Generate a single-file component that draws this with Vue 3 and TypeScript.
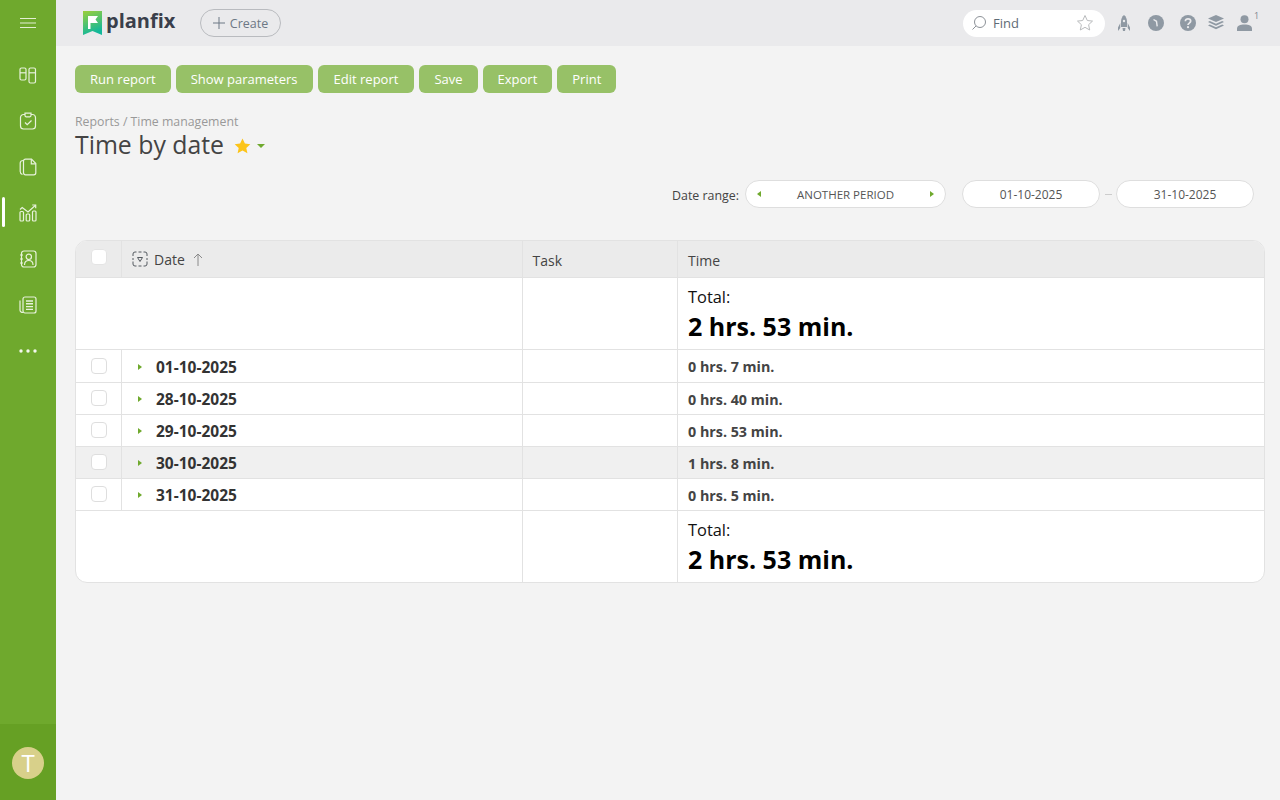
<script setup lang="ts">
const actions: string[] = ['Run report', 'Show parameters', 'Edit report', 'Save', 'Export', 'Print']
const rows = [
  { date: '01-10-2025', time: '0 hrs. 7 min.', hover: false },
  { date: '28-10-2025', time: '0 hrs. 40 min.', hover: false },
  { date: '29-10-2025', time: '0 hrs. 53 min.', hover: false },
  { date: '30-10-2025', time: '1 hrs. 8 min.', hover: true },
  { date: '31-10-2025', time: '0 hrs. 5 min.', hover: false },
]
</script>

<template>
  <div class="page">
    <aside class="side">
      <div class="burger">
        <svg width="16" height="12" viewBox="0 0 16 12"><path d="M0 1.500h16M0 6h16M0 10.500h16" stroke="#e3efd3" stroke-width="1.200" fill="none" /></svg>
      </div>
      <nav class="nav">
        <div class="nav-item">
          <svg width="18" height="18" viewBox="0 0 18 18" fill="none" stroke="#e8f2dc" stroke-width="1.200"><rect x="1" y="2" width="6" height="12" rx="1.500" /><path d="M1 6.800h6" /><rect x="10" y="2" width="6.500" height="15" rx="1.500" /><path d="M10 6.800h6.500" /></svg>
        </div>
        <div class="nav-item">
          <svg width="18" height="18" viewBox="0 0 18 18" fill="none" stroke="#e8f2dc" stroke-width="1.200"><path d="M6 2.500H4.500a3 3 0 0 0-3 3v8.500a3 3 0 0 0 3 3h9a3 3 0 0 0 3-3V5.500a3 3 0 0 0-3-3H12" /><path d="M6 1.200h6v2.400a1.200 1.200 0 0 1-1.200 1.200H7.200A1.200 1.200 0 0 1 6 3.600z" /><path d="M6 10.500l2.200 2.200L12.500 8.500" /></svg>
        </div>
        <div class="nav-item">
          <svg width="18" height="18" viewBox="0 0 18 18" fill="none" stroke="#e8f2dc" stroke-width="1.200"><path d="M4 2.500C2.500 2.500 1.200 3.500 1.200 5v8.500C1.200 15 2.200 16 3.500 16.500" /><path d="M6.500 1.200h6l4.300 4.300v9.300a2 2 0 0 1-2 2H6.500a2 2 0 0 1-2-2V3.200a2 2 0 0 1 2-2z" /><path d="M12.300 1.500v4.300h4.300" /></svg>
        </div>
        <div class="nav-item active">
          <span class="marker"></span>
          <svg width="18" height="18" viewBox="0 0 18 18" fill="none" stroke="#e8f2dc" stroke-width="1.200"><rect x="1" y="7.500" width="3.500" height="9.500" rx="1" /><rect x="7.200" y="10" width="3.500" height="7" rx="1" /><rect x="13.500" y="7" width="3.500" height="10" rx="1" /><path d="M1 5.500l2.200-2 5.800 4.500 7.500-6.800" /><path d="M13.200 1h3.500v3.300" /></svg>
        </div>
        <div class="nav-item">
          <svg width="18" height="18" viewBox="0 0 18 18" fill="none" stroke="#e8f2dc" stroke-width="1.200"><rect x="2.500" y="1" width="14.500" height="16" rx="2.500" /><circle cx="9.800" cy="6.800" r="2.700" /><path d="M5.500 15c0-3 2-4.500 4.300-4.500S14 12 14 15" /><path d="M1 5h3M1 9h3M1 13h3" /></svg>
        </div>
        <div class="nav-item">
          <svg width="18" height="18" viewBox="0 0 18 18" fill="none" stroke="#e8f2dc" stroke-width="1.200"><rect x="4" y="1" width="13" height="16" rx="2" /><path d="M4 16.500C2 16.500 1 15.500 1 14V4.500" /><path d="M7 5h7M7 7.800h7M7 10.600h7M7 13.400h7" stroke-width="1.400" /></svg>
        </div>
        <div class="nav-item">
          <svg width="18" height="6" viewBox="0 0 18 6" fill="#f4f8ee"><circle cx="2" cy="3" r="1.700" /><circle cx="9" cy="3" r="1.700" /><circle cx="16" cy="3" r="1.700" /></svg>
        </div>
      </nav>
      <div class="side-foot">
        <div class="avatar">T</div>
      </div>
    </aside>

    <div class="main">
      <header class="top">
        <div class="logo">
          <svg width="20" height="24" viewBox="0 0 20 24">
            <defs>
              <linearGradient id="lg" x1="0" y1="0" x2="0.300" y2="1">
                <stop offset="0" stop-color="#9ccf3a" />
                <stop offset="1" stop-color="#12b89a" />
              </linearGradient>
            </defs>
            <path d="M0 0h19v24l-9.500-4-9.500 4z" fill="url(#lg)" />
            <path d="M5 18V5h10l-2.500 3.500L15 12H7.500v6z" fill="#fff" />
          </svg>
          <span class="logo-text">planfix</span>
        </div>
        <button class="create">
          <svg width="12" height="12" viewBox="0 0 12 12"><path d="M6 0v12M0 6h12" stroke="#6d7885" stroke-width="1" /></svg>
          <span>Create</span>
        </button>
        <div class="top-right">
          <div class="search">
            <svg width="16" height="16" viewBox="0 0 16 16" fill="none" stroke="#8d9298" stroke-width="1"><circle cx="9" cy="7" r="5.500" /><path d="M5 11l-3.500 3.500" /></svg>
            <span class="find">Find</span>
            <svg class="fav" width="18" height="18" viewBox="0 0 18 18" fill="none" stroke="#b9bbbd" stroke-width="1"><path d="M9 1.500l2.300 5 5.200.6-3.900 3.600 1.100 5.300L9 13.300 4.300 16l1.100-5.300L1.500 7.100l5.200-.6z" /></svg>
          </div>
          <div class="tools">
            <svg class="t-rocket" width="14" height="17" viewBox="0 0 14 17" fill="#8f99a3"><path d="M7 0c2 1.500 3 4 3 6.500V12H4V6.500C4 4 5 1.500 7 0z" /><path d="M3.300 8v5L1 16v-3.500zM10.700 8v5l2.300 3v-3.500z" /><path d="M5.500 13h3l-.5 3H6z" /><circle cx="7" cy="6" r="1.200" fill="#eaeaec" /></svg>
            <svg class="t-clock" width="16" height="16" viewBox="0 0 16 16"><circle cx="8" cy="8" r="8" fill="#8f99a3" /><path d="M5.500 4.500l3 1.800.7 5" stroke="#eaeaec" stroke-width="1.400" fill="none" /></svg>
            <svg class="t-help" width="16" height="16" viewBox="0 0 16 16"><circle cx="8" cy="8" r="8" fill="#8f99a3" /><path d="M5.400 6.200C5.400 4.700 6.500 3.800 8 3.800s2.700.9 2.700 2.300c0 2-2.700 2-2.700 3.900" stroke="#eaeaec" stroke-width="1.700" fill="none" /><circle cx="8" cy="12.200" r="1.100" fill="#eaeaec" /></svg>
            <svg class="t-stack" width="16" height="16" viewBox="0 0 16 16" fill="#8f99a3"><path d="M8 0l8 3.500L8 7 0 3.500z" /><path d="M1.800 6L8 8.800 14.200 6 16 7 8 10.700 0 7z" /><path d="M1.800 9.400L8 12.200l6.200-2.800 1.800 1-8 3.800-8-3.800z" /></svg>
            <div class="user">
              <svg width="15" height="16" viewBox="0 0 15 16" fill="#8f99a3"><circle cx="7.500" cy="4.200" r="4" /><path d="M0 16v-2.500C0 10.800 3 9.400 7.500 9.400s7.500 1.400 7.500 4.100V16z" /></svg>
              <span class="badge">1</span>
            </div>
          </div>
        </div>
      </header>

      <main class="content">
        <div class="actions">
          <button v-for="a in actions" :key="a" class="action">{{ a }}</button>
        </div>

        <div class="crumbs">Reports / Time management</div>
        <div class="title-row">
          <h1 class="title">Time by date</h1>
          <svg class="star" width="17" height="16" viewBox="0 0 17 16"><path d="M8.500 0.500l2.400 5 5.400.7-4 3.700 1.100 5.400-4.900-2.700-4.900 2.700 1.100-5.400-4-3.700 5.400-.7z" fill="#fcc419" /></svg>
          <span class="caret-down"></span>
        </div>

        <div class="filters">
          <span class="range-label">Date range:</span>
          <div class="pill period">
            <span class="tri left"></span>
            <span>ANOTHER PERIOD</span>
            <span class="tri right"></span>
          </div>
          <div class="pill date first">01-10-2025</div>
          <span class="dash"></span>
          <div class="pill date">31-10-2025</div>
        </div>

        <div class="table-wrap">
          <table class="grid">
            <colgroup>
              <col class="c1" />
              <col class="c2" />
              <col class="c3" />
              <col />
            </colgroup>
            <thead>
              <tr class="head">
                <th class="cb-cell"><span class="cb head-cb"></span></th>
                <th>
                  <div class="date-head">
                    <svg width="16" height="16" viewBox="0 0 16 16" fill="none" stroke="#555a60" stroke-width="1"><path d="M1 5V3a2 2 0 0 1 2-2h1.500M11.500 1H13a2 2 0 0 1 2 2v2M15 10.500V13a2 2 0 0 1-2 2h-1.500M4.500 15H3a2 2 0 0 1-2-2v-2.500M6.500 1h3M6.500 15h3M1 7v2M15 7v2" /><path d="M5.500 6.500h5L8 10.500z" /></svg>
                    <span>Date</span>
                    <svg class="sort" width="10" height="13" viewBox="0 0 10 13" fill="none" stroke="#8a8a8a" stroke-width="1"><path d="M5 13V1M1 5l4-4 4 4" /></svg>
                  </div>
                </th>
                <th class="plain-head">Task</th>
                <th class="plain-head last">Time</th>
              </tr>
            </thead>
            <tbody>
              <tr class="total">
                <td colspan="2"></td>
                <td></td>
                <td class="last">
                  <div class="total-label">Total:</div>
                  <div class="total-val">2 hrs. 53 min.</div>
                </td>
              </tr>
              <tr v-for="(r, i) in rows" :key="r.date" class="row" :class="{ hover: r.hover, 'row-first': i === 0 }">
                <td class="cb-cell"><span class="cb"></span></td>
                <td>
                  <div class="date-cell">
                    <span class="tri right small"></span>
                    <span>{{ r.date }}</span>
                  </div>
                </td>
                <td></td>
                <td class="last time">{{ r.time }}</td>
              </tr>
              <tr class="total end">
                <td colspan="2"></td>
                <td></td>
                <td class="last">
                  <div class="total-label">Total:</div>
                  <div class="total-val">2 hrs. 53 min.</div>
                </td>
              </tr>
            </tbody>
          </table>
        </div>
      </main>
    </div>
  </div>
</template>

<style>
html, body { margin: 0; padding: 0; }
</style>

<style scoped>
* { box-sizing: border-box; }
.page {
  display: flex;
  width: 1280px;
  height: 800px;
  overflow: hidden;
  background: #f3f3f3;
  font-family: "Open Sans", "Noto Sans", sans-serif;
  color: #333;
}
.side {
  width: 56px;
  flex: none;
  background: #6fa92d;
  display: flex;
  flex-direction: column;
}
.burger {
  height: 46px;
  display: flex;
  align-items: center;
  justify-content: center;
}
.nav {
  flex: 1;
  display: flex;
  flex-direction: column;
  padding-top: 5px;
}
.nav-item {
  position: relative;
  height: 46px;
  padding-top: 2px;
  display: flex;
  align-items: center;
  justify-content: center;
}
.marker {
  position: absolute;
  left: 2px;
  top: 8px;
  width: 3px;
  height: 30px;
  background: #fff;
  border-radius: 2px;
}
.side-foot {
  height: 76px;
  background: #66a024;
  display: flex;
  align-items: center;
  justify-content: center;
  padding-top: 2px;
}
.avatar {
  width: 32px;
  height: 32px;
  border-radius: 50%;
  background: #d8d08a;
  color: #fff;
  font-size: 24px;
  line-height: 32px;
  text-align: center;
}
.main {
  flex: 1;
  display: flex;
  flex-direction: column;
  min-width: 0;
}
.top {
  height: 46px;
  flex: none;
  background: #eaeaec;
  display: flex;
  align-items: center;
  padding-left: 27px;
}
.logo {
  display: flex;
  align-items: center;
  gap: 3px;
  width: 117px;
}
.logo-text {
  font-family: "Open Sans", sans-serif;
  font-weight: 700;
  font-size: 20px;
  line-height: 24px;
  color: #3a3f4b;
  position: relative;
  top: -2px;
}
.create {
  width: 81px;
  height: 28px;
  border: 1px solid #b9bbbf;
  border-radius: 14px;
  background: transparent;
  display: flex;
  align-items: center;
  justify-content: center;
  gap: 5px;
  padding: 0;
  font: inherit;
  font-size: 12.500px;
  color: #6d7885;
}
.top-right {
  margin-left: auto;
  display: flex;
  align-items: center;
  padding-right: 28px;
}
.search {
  width: 142px;
  height: 27px;
  background: #fff;
  border-radius: 14px;
  display: flex;
  align-items: center;
  padding: 0 11px 0 8px;
  gap: 6px;
}
.find {
  font-size: 13px;
  color: #5f6b76;
  flex: 1;
}
.tools {
  display: flex;
  align-items: center;
  margin-left: 12px;
}
.t-clock { margin-left: 17px; }
.t-help { margin-left: 16px; }
.t-stack { margin-left: 12px; }
.user {
  position: relative;
  width: 15px;
  height: 16px;
  margin-left: 13px;
}
.user svg { display: block; }
.badge {
  position: absolute;
  left: 17px;
  top: -6px;
  font-size: 9px;
  color: #7c858e;
}
.content {
  flex: 1;
  padding: 19px 15px 0 19px;
}
.actions {
  display: flex;
  gap: 5px;
}
.action {
  height: 28px;
  padding: 0 15px;
  border: 0;
  border-radius: 6px;
  background: #97c167;
  color: #fff;
  font: inherit;
  font-size: 13px;
  white-space: nowrap;
}
.action:nth-child(3) { padding: 0 16px; }
.crumbs {
  margin-top: 20px;
  font-size: 12.300px;
  line-height: 17px;
  color: #999;
}
.title-row {
  display: flex;
  align-items: center;
  height: 30px;
  margin-top: -1px;
}
.title {
  margin: 0;
  font-weight: 400;
  font-size: 24.800px;
  line-height: 30px;
  color: #444;
}
.star { margin-left: 10px; position: relative; top: 2px; }
.caret-down {
  margin-left: 6px;
  width: 0;
  height: 0;
  border-left: 4px solid transparent;
  border-right: 4px solid transparent;
  border-top: 4px solid #6fa92d;
  position: relative;
  top: 2px;
}
.filters {
  display: flex;
  align-items: center;
  justify-content: flex-end;
  margin-top: 21px;
  padding-right: 11px;
  height: 28px;
}
.range-label {
  font-size: 12.400px;
  color: #444;
  margin-right: 6px;
  padding-top: 2px;
}
.pill {
  height: 28px;
  border: 1px solid #dedede;
  border-radius: 14px;
  background: #fff;
  font-size: 12px;
  color: #555;
  display: flex;
  align-items: center;
  justify-content: center;
}
.period {
  width: 201px;
  justify-content: space-between;
  padding: 0 11px;
  font-size: 11.500px;
}
.date { width: 138px; }
.first { margin-left: 16px; }
.dash {
  width: 7px;
  height: 1px;
  background: #ccc;
  margin: 0 4px 0 5px;
}
.tri {
  width: 0;
  height: 0;
  border-top: 3.500px solid transparent;
  border-bottom: 3.500px solid transparent;
}
.tri.left { border-right: 4px solid #6fa92d; }
.tri.right { border-left: 4px solid #6fa92d; }
.table-wrap {
  margin-top: 32px;
  width: 1190px;
  border: 1px solid #e2e2e2;
  border-radius: 12px;
  overflow: hidden;
  background: #fff;
}
.grid {
  width: 1188px;
  table-layout: fixed;
  border-collapse: collapse;
}
.c1 { width: 45px; }
.c2 { width: 401px; }
.c3 { width: 155px; }
th, td {
  padding: 0;
  border-right: 1px solid #e2e2e2;
  border-bottom: 1px solid #e2e2e2;
  vertical-align: middle;
  text-align: left;
}
.last { border-right: 0; padding-left: 10.500px; }
.end td { border-bottom: 0; }
.head { height: 36px; background: #ebebeb; }
th {
  font-weight: 400;
  font-size: 14px;
  color: #444;
}
.plain-head { padding-left: 10px; padding-top: 3px; }
.plain-head.last { padding-left: 10.500px; }
.date-head {
  display: flex;
  align-items: center;
  padding-left: 10px;
  gap: 6.500px;
  padding-top: 1px;
}
.sort { margin-left: 2px; }
.cb-cell { text-align: center; }
.cb {
  display: block;
  width: 16px;
  height: 16px;
  border: 1px solid #dedede;
  border-radius: 4px;
  background: #fff;
  margin: 0 0 0 15px;
}
.head-cb { margin-top: -3px; border-color: #e4e4e4; }
.total { height: 72px; }
.total .last { padding-top: 2px; }
.total-label {
  font-size: 16.400px;
  line-height: 22px;
  color: #111;
}
.total-val {
  font-size: 25px;
  line-height: 34px;
  font-weight: 700;
  color: #000;
  margin-top: 1px;
}
.row { height: 32px; }
.row-first { height: 33px; }
.row.hover { background: #f0f0f0; }
.date-cell {
  display: flex;
  align-items: center;
  padding-left: 16px;
  padding-top: 2px;
  font-size: 15.500px;
  font-weight: 700;
  color: #333;
}
.tri.small { margin-right: 14.500px; }
.time {
  padding-top: 2px;
  font-size: 14.300px;
  font-weight: 700;
  color: #444;
}
</style>
